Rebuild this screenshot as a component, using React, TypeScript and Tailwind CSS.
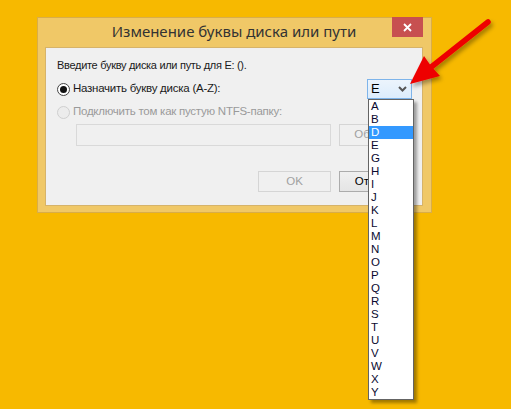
import React from 'react';

const letters = ['A', 'B', 'D', 'E', 'G', 'H', 'I', 'J', 'K', 'L', 'M', 'N', 'O', 'P', 'Q', 'R', 'S', 'T', 'U', 'V', 'W', 'X', 'Y'];

function Radio({ checked, disabled }: { checked?: boolean; disabled?: boolean }) {
  return (
    <span
      className={`flex h-[13px] w-[13px] shrink-0 items-center justify-center rounded-full border ${
        disabled ? 'border-[#cfcfcf] bg-[#ececec]' : 'border-[#444] bg-white'
      }`}
    >
      {checked && <span className="h-[7px] w-[7px] rounded-full bg-[#111]" />}
    </span>
  );
}

export default function App() {
  return (
    <div className="relative h-[409px] w-[511px] overflow-hidden bg-[#f7b900] font-['Liberation_Sans',sans-serif] text-[11px] text-[#1a1a1a]">
      {/* Dialog window */}
      <div className="ml-[37px] pt-[17px]">
        <div className="flex h-[196px] w-[395px] flex-col border border-[#d8ad4a] bg-[#f0c867] pb-[6px] pl-[7px] pr-[8px]">
          <div className="relative flex h-[29px] shrink-0 items-center justify-center">
            <span className="pb-[2px] font-['Noto_Sans',sans-serif] text-[15px] text-[#333]">Изменение буквы диска или пути</span>
            <div className="absolute right-[0px] top-[-1px] flex h-[20px] w-[31px] items-center justify-center bg-[#c75050]">
              <svg width="9" height="9" viewBox="0 0 9 9">
                <path d="M1 1 L8 8 M8 1 L1 8" stroke="white" strokeWidth="1.8" />
              </svg>
            </div>
          </div>

          <div className="flex flex-1 flex-col border border-[#d6b36a] bg-[#f0f0f0] pl-[11px] pr-[10px]">
            <div className="mt-[10px] h-[15px] leading-[15px] tracking-[-0.3px]">Введите букву диска или путь для E: ().</div>

            <div className="mt-[6px] flex h-[20px] items-center justify-between">
              <div className="flex items-center gap-[3px]">
                <Radio checked />
                <span className="text-[11.5px] tracking-[-0.25px]">Назначить букву диска (A-Z):</span>
              </div>
              <div className="flex h-[20px] w-[45px] items-center justify-between border border-[#7eb4ea] bg-gradient-to-b from-[#ecf4fc] to-[#dcecfc] pl-[3px] pr-[4px] text-[13px] text-black">
                <span>E</span>
                <svg width="9" height="6" viewBox="0 0 9 6">
                  <path d="M1 1 L4.5 4.5 L8 1" fill="none" stroke="#555" strokeWidth="2" />
                </svg>
              </div>
            </div>

            <div className="mt-[5px] flex h-[16px] items-center gap-[3px] text-[#9a9a9a]">
              <Radio disabled />
              <span className="text-[11.5px] tracking-[-0.25px]">Подключить том как пустую NTFS-папку:</span>
            </div>

            <div className="mt-[4px] flex h-[22px] items-center gap-[8px] pl-[19px]">
              <div className="h-[22px] w-[256px] border border-[#d9d9d9] bg-[#f0f0f0]" />
              <div className="flex h-[22px] w-[73px] items-center justify-center border border-[#d5d5d5] bg-[#f0f0f0] text-[11.5px] text-[#a0a0a0]">
                Обзор...
              </div>
            </div>

            <div className="mt-[25px] flex justify-end gap-[8px] text-[11.5px]">
              <div className="flex h-[21px] w-[73px] items-center justify-center border border-[#d5d5d5] bg-[#f0f0f0] text-[#a0a0a0]">
                OK
              </div>
              <div className="flex h-[21px] w-[73px] items-center justify-center border border-[#acacac] bg-gradient-to-b from-[#f0f0f0] to-[#e5e5e5] text-black">
                Отмена
              </div>
            </div>
          </div>
        </div>
      </div>

      {/* Opened drop-down list */}
      <div className="absolute left-[368px] top-[99px] w-[46px] border border-[#646464] bg-white text-[11.5px] text-[#0a0a30] shadow-[3px_3px_3px_rgba(0,0,0,0.35)]">
        {letters.map((l) => (
          <div
            key={l}
            className={`h-[13px] overflow-hidden pl-[2px] leading-[13px] ${l === 'D' ? 'bg-[#3399ff] text-white' : ''}`}
          >
            {l}
          </div>
        ))}
      </div>

      {/* Red arrow */}
      <svg className="absolute left-0 top-0" width="511" height="409" viewBox="0 0 511 409">
        <defs>
          <filter id="sh" x="-20%" y="-20%" width="140%" height="140%">
            <feDropShadow dx="2" dy="3" stdDeviation="2" floodColor="#000" floodOpacity="0.35" />
          </filter>
        </defs>
        <g filter="url(#sh)">
          <line x1="488" y1="22" x2="430" y2="68" stroke="#ee0000" strokeWidth="5.5" strokeLinecap="round" />
          <polygon points="410,84 424,56 431,66 440,76" fill="#ee0000" />
        </g>
      </svg>
    </div>
  );
}
